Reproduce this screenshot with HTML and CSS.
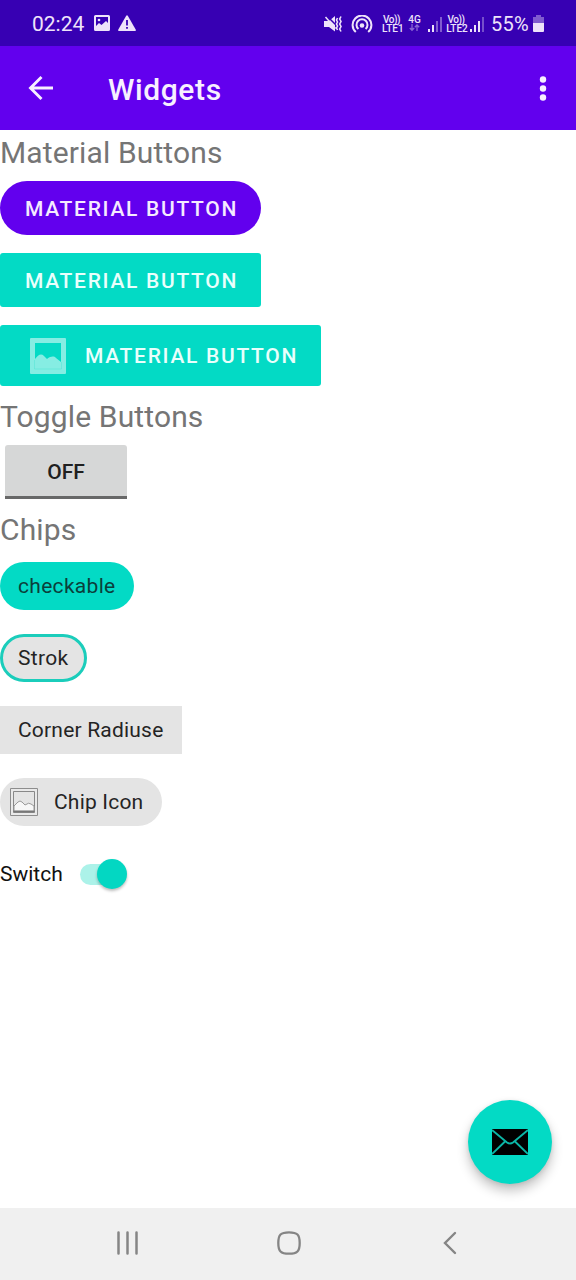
FILE: index.html
```html
<!DOCTYPE html>
<html lang="en">
<head>
<meta charset="utf-8">
<title>Widgets</title>
<link rel="stylesheet" href="styles.css">
</head>
<body>
<div class="screen">
  <div class="status-bar">
    <div class="status-left">
      <span class="clock">02:24</span>
      <svg class="status-picture" width="16" height="16" viewBox="0 0 16 16"><path fill="currentColor" fill-rule="evenodd" d="M1.500 0h13A1.500 1.500 0 0 1 16 1.500v13a1.500 1.500 0 0 1-1.500 1.500h-13A1.500 1.500 0 0 1 0 14.500v-13A1.500 1.500 0 0 1 1.500 0zM2 2v9l3-3 2.500 2L12 6l2 2V2z"/><circle cx="5" cy="5" r="1.300" fill="currentColor"/></svg>
      <svg class="status-warning" width="18" height="16" viewBox="0 0 18 16"><path fill="currentColor" d="M8.200.7q.8-1 1.600 0l8 14q.3 1-.6 1.300H.8q-.9-.3-.6-1.300z"/><path stroke="#3700b3" stroke-width="1.800" d="M9 5v5.500M9 12v1.800"/></svg>
    </div>
    <div class="status-right">
      <svg class="mute" width="18" height="18" viewBox="0 0 18 18"><path fill="currentColor" d="M0 6h5l6-5v15.500L5 12H0z"/><path d="M3 1l9 9" stroke="#3700b3" stroke-width="1.500"/><path d="M1.500 2l10 11.500" stroke="currentColor" stroke-width="1.500"/><path d="M13.500 3l-1 2 1 2-1 2 1 2-1 2 1 2M17 1.500l-1.300 2.500L17 6.500l-1.300 2.500L17 11.500 15.700 14l1.300 2.500" fill="none" stroke="currentColor" stroke-width="1.600"/></svg>
      <svg class="hotspot" width="22" height="18" viewBox="0 0 22 18"><g fill="none" stroke="currentColor" stroke-width="2"><path d="M4.800 17a9.400 9.400 0 1 1 12.400 0"/><path d="M7.400 14a5.500 5.500 0 1 1 7.200 0"/></g><circle cx="11" cy="10.500" r="2.300" fill="currentColor"/></svg>
      <span class="volte"><span class="volte-top">Vo))</span><span>LTE1</span></span>
      <span class="network"><span>4G</span><svg width="11" height="8" viewBox="0 0 11 8"><path d="M3 0v6M.8 4L3 6.300 5.200 4M8 7V1M5.800 3.300L8 1l2.200 2.300" fill="none" stroke="currentColor" stroke-width="1.300" opacity=".45"/></svg></span>
      <svg class="signal" width="14" height="16" viewBox="0 0 14 16"><path fill="currentColor" d="M0 13h2v3H0zM4 9h2v7H4z"/><path fill="currentColor" opacity=".4" d="M8 5h2v11H8zM12 1h2v15h-2z"/></svg>
      <span class="volte volte-second"><span class="volte-top">Vo))</span><span>LTE2</span></span>
      <svg class="signal" width="14" height="16" viewBox="0 0 14 16"><path fill="currentColor" d="M0 13h2v3H0zM4 9h2v7H4zM8 5h2v11H8z"/><path fill="currentColor" opacity=".35" d="M12 1h2v15h-2z"/></svg>
      <span class="percent">55%</span>
      <svg class="battery" width="11" height="17" viewBox="0 0 11 17"><path fill="currentColor" opacity=".4" d="M3 0h5v2h3v6H0V2h3z"/><path fill="currentColor" d="M0 8h11v8q0 1-1 1H1q-1 0-1-1z"/></svg>
    </div>
  </div>

  <header class="app-bar">
    <svg class="back" width="26" height="26" viewBox="0 0 26 26"><path d="M25 13H3M13.500 2L2.500 13l11 11" fill="none" stroke="currentColor" stroke-width="2.900"/></svg>
    <h1 class="title">Widgets</h1>
    <svg class="overflow" width="8" height="26" viewBox="0 0 8 26"><g fill="currentColor"><circle cx="4" cy="4.500" r="3.200"/><circle cx="4" cy="13.500" r="3.200"/><circle cx="4" cy="22.500" r="3.200"/></g></svg>
  </header>

  <main class="content">
    <h2 class="heading">Material Buttons</h2>
    <button class="button button-pill">MATERIAL BUTTON</button>
    <button class="button">MATERIAL BUTTON</button>
    <button class="button button-icon">
      <svg width="36" height="36" viewBox="0 0 36 36"><path fill="#fff" fill-rule="evenodd" opacity=".52" d="M1 0h34q1 0 1 1v34q0 1-1 1H1q-1 0-1-1V1Q0 0 1 0zM5 5v16c3-4 6-6 9-3l3 3c4-3 7-3 9-1l5 4V5z"/><path d="M4.500 22v9h27v-7" fill="none" stroke="#03dac5" opacity=".2"/></svg>
      <span>MATERIAL BUTTON</span>
    </button>
    <h2 class="heading heading-toggle">Toggle Buttons</h2>
    <button class="toggle">OFF</button>
    <h2 class="heading heading-chips">Chips</h2>
    <div class="chip chip-checked">checkable</div>
    <div class="chip chip-stroke">Strok</div>
    <div class="chip chip-square">Corner Radiuse</div>
    <div class="chip chip-icon">
      <svg width="28" height="28" viewBox="0 0 28 28"><path fill="#e9e9e9" stroke="#8d8d8d" d="M.5.5h27v27H.5z"/><path fill="#e4e4e4" stroke="#888" d="M3.500 3.500h21v21h-21z"/><path fill="#f7f7f7" stroke="#999" d="M4 18l4-4q2-2 4 0l3 3q4-3 6-1l3 2v5H4z"/><path d="M3.500 23.500h21" stroke="#777" stroke-width="1.500"/></svg>
      <span>Chip Icon</span>
    </div>
    <label class="switch"><span>Switch</span><span class="track"><span class="thumb"></span></span></label>
  </main>

  <button class="fab" aria-label="Send mail">
    <svg width="36" height="26" viewBox="0 0 36 26"><path d="M0 0h36v26H0z"/><path d="M0 1l15 12.500q3 2 6 0L36 1M0 25l13-12.500M36 25L23 12.500" fill="none" stroke="#0bb5a5" stroke-width="1.900"/></svg>
  </button>

  <nav class="nav-bar">
    <svg width="22" height="24" viewBox="0 0 22 24"><path d="M1.500 1.500v21M10.500 1.500v21M19.500 1.500v21" stroke="currentColor" stroke-width="2.500" stroke-linecap="round"/></svg>
    <svg class="home" width="24" height="24" viewBox="0 0 24 24"><path d="M12 1.300c8.300 0 10.700 2.400 10.700 10.700S20.300 22.700 12 22.700 1.300 20.300 1.300 12 3.700 1.300 12 1.300z" fill="none" stroke="currentColor" stroke-width="2.300"/></svg>
    <svg width="14" height="24" viewBox="0 0 14 24"><path d="M12 2L2 12l10 10" fill="none" stroke="currentColor" stroke-width="2.400" stroke-linecap="round"/></svg>
  </nav>
</div>
</body>
</html>
```
FILE: styles.css
```css
* { box-sizing: border-box; }
body { margin: 0; background: #fff; font-family: Roboto, sans-serif; }
button { border: 0; margin: 0; padding: 0; font-family: inherit; }
svg { display: block; flex: none; }
.screen { position: relative; display: flex; flex-direction: column; width: 576px; height: 1280px; overflow: hidden; }

.status-bar { display: flex; flex: none; justify-content: space-between; height: 46px; padding: 0 32px; background: #3700b3; color: #eee3fa; }
.status-left, .status-right { display: flex; align-items: center; height: 47px; }
.status-left { height: 46px; }
.clock { width: 53px; padding-top: 2px; font-size: 21px; }
.status-picture { margin-left: 9px; }
.status-warning { margin-left: 8px; }
.mute { margin-right: 9px; }
.hotspot { margin-right: 9px; }
.volte { display: flex; flex-direction: column; width: 21px; font-size: 10px; font-weight: 500; line-height: 9px; text-align: center; white-space: nowrap; }
.volte-top { padding-right: 2px; letter-spacing: -.5px; }
.volte-second { width: 22px; margin-left: 4px; }
.network { display: flex; flex-direction: column; align-items: center; width: 13px; margin: 0 7px 0 5px; font-size: 10px; font-weight: 500; line-height: 9px; }
.volte-second + .signal { margin-left: 2px; margin-right: 7px; }
.percent { width: 40px; padding-top: 1px; font-size: 20px; letter-spacing: .2px; }
.battery { margin-left: 2px; }

.app-bar { display: flex; flex: none; align-items: center; height: 84px; padding: 0 29px 0 28px; background: #6200ee; color: #f7f0ff; }
.title { flex: 1; margin: 4px 0 0 54px; font-size: 30px; font-weight: 500; line-height: 40px; letter-spacing: .6px; }

.content { display: flex; flex: 1; flex-direction: column; align-items: flex-start; }
.heading { height: 51px; margin: 0; padding-top: 3px; color: #757575; font-size: 30px; font-weight: 400; line-height: 40px; letter-spacing: .13px; white-space: nowrap; }
.heading-toggle { height: 51px; margin-top: -10px; }
.heading-chips { margin-top: 8px; height: 55px; }
.button { display: flex; align-items: center; justify-content: flex-start; width: 261px; height: 54px; margin-bottom: 18px; padding: 2px 0 0 25px; border-radius: 3px; background: #03dac5; color: #e9fffc; font-size: 21px; font-weight: 500; letter-spacing: 1.7px; white-space: nowrap; }
.button-pill { border-radius: 27px; background: #6200ee; color: #f5eaff; }
.button-icon { width: 321px; height: 61px; gap: 19px; padding: 0 0 0 30px; }
.button-icon span { padding-top: 1px; }
.toggle { width: 122px; height: 54px; margin-left: 5px; padding-top: 3px; border-bottom: 3px solid #686868; border-radius: 3px 3px 0 0; background: #d6d7d7; color: #202020; font-size: 21px; font-weight: 500; }

.chip { display: flex; align-items: center; height: 48px; margin-bottom: 24px; padding: 0 18px; border-radius: 24px; background: #e4e4e4; color: #242424; font-size: 21px; letter-spacing: .2px; white-space: nowrap; }
.chip-checked { width: 134px; background: #03dac5; color: #0b3f3b; letter-spacing: .3px; }
.chip-stroke { width: 87px; padding: 0 15px; border: 3px solid #1bcdbb; letter-spacing: .3px; }
.chip-square { width: 182px; border-radius: 0; }
.chip-icon { width: 162px; gap: 16px; padding: 0 10px; }
.switch { display: flex; align-items: center; height: 48px; color: #111; font-size: 21px; }
.switch > span:first-child { width: 80px; }
.track { display: flex; align-items: center; justify-content: flex-end; width: 47px; height: 21px; border-radius: 11px; background: linear-gradient(90deg, #acf2e9 38px, transparent 38px); }
.thumb { flex: none; width: 30px; height: 30px; border-radius: 50%; background: #03d7c2; box-shadow: 0 2px 3px #0004; }

.fab { position: absolute; right: 24px; bottom: 96px; display: flex; align-items: center; justify-content: center; width: 84px; height: 84px; border-radius: 50%; background: #03dac5; box-shadow: 0 7px 12px #0000003b, 0 1px 4px #00000018; }
.nav-bar { display: flex; flex: none; align-items: center; justify-content: space-between; height: 72px; padding: 0 119px 2px 117px; background: #f0f0f0; color: #858585; }
.home { margin-right: 5px; }
```
